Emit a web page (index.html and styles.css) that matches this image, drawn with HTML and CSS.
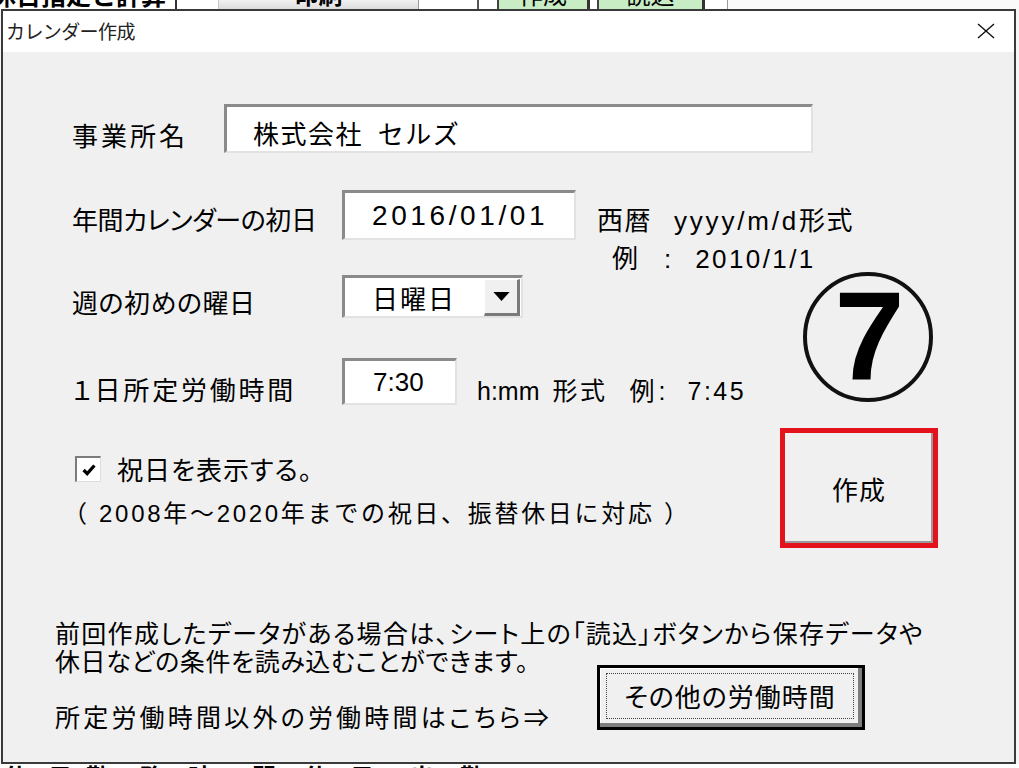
FILE: index.html
```html
<!DOCTYPE html>
<html lang="ja">
<head>
<meta charset="utf-8">
<title>カレンダー作成</title>
<link rel="stylesheet" href="styles.css">
</head>
<body>
<div class="sheet-top">
  <div class="cell cell-title"><span>休日指定と計算</span></div>
  <div class="cell cell-blank1"></div>
  <div class="cell cell-print"><span>印刷</span></div>
  <div class="cell cell-blank2"></div>
  <div class="cell cell-blank3"></div>
  <div class="cell cell-green cell-green1"><span>作成</span></div>
  <div class="cell cell-gap"></div>
  <div class="cell cell-green cell-green2"><span>読込</span></div>
  <div class="cell cell-blank4"></div>
  <div class="cell cell-rest"></div>
</div>

<div class="dialog">
  <div class="titlebar">
    <span class="title">カレンダー作成</span>
    <svg class="close" viewBox="0 0 18 16" aria-label="閉じる">
      <line x1="1" y1="1" x2="17" y2="15" />
      <line x1="17" y1="1" x2="1" y2="15" />
    </svg>
  </div>

  <div class="form">
    <div class="fields">
      <div class="row row-name">
        <div class="label label-name">事業所名</div>
        <div class="box input-name">株式会社&nbsp;&nbsp;セルズ</div>
      </div>

      <div class="row row-date">
        <div class="label label-wide label-date">年間カレンダーの初日</div>
        <div class="box input-date">2016/01/01</div>
        <div class="hint">
          <div class="hint-line"><span class="cjk hint-era">西暦</span><span class="latin hint-fmt">yyyy/m/d</span><span class="cjk hint-era">形式</span></div>
          <div class="hint-line hint-ex"><span class="cjk">例</span><span class="latin hint-colon">:</span><span class="latin hint-num">2010/1/1</span></div>
        </div>
      </div>

      <div class="split">
        <div class="col-left">
          <div class="row row-week">
            <div class="label label-wide label-week">週の初めの曜日</div>
            <div class="box select">
              <span class="select-value">日曜日</span>
              <span class="select-btn">
                <svg class="tri" viewBox="0 0 18 10"><polygon points="0,0 18,0 9,10" /></svg>
              </span>
            </div>
          </div>

          <div class="row row-time">
            <div class="label label-wide label-time">１日所定労働時間</div>
            <div class="box input-time">7:30</div>
            <div class="hint2">
              <span class="latin">h:mm</span><span class="cjk hint2-fmt">形式</span><span class="cjk hint2-ex">例</span><span class="latin">:</span><span class="latin hint2-num">7:45</span>
            </div>
          </div>

          <div class="check-row">
            <span class="checkbox">
              <svg viewBox="0 0 20 20"><polyline points="4,10 8,14 16,5" /></svg>
            </span>
            <span class="check-label">祝日を表示する。</span>
          </div>

          <div class="note">（ 2008年～2020年までの祝日、振替休日に対応 ）</div>
        </div>

        <div class="col-right">
          <div class="create-btn">作成</div>
        </div>
      </div>
    </div>

    <div class="footer">
      <div class="f-line1">前回作成したデータがある場合は、シート上の「読込」ボタンから保存データや</div>
      <div class="f-line2">休日などの条件を読み込むことができます。</div>
      <div class="f-line3">所定労働時間以外の労働時間はこちら⇒</div>
      <div class="other-btn"><span class="focus">その他の労働時間</span></div>
    </div>

    <div class="badge"><span>7</span></div>
  </div>
</div>

<div class="sheet-bottom">
  <span class="frag f1">休</span><span class="frag f2">日</span><span class="frag f3">勤</span><span class="frag f4">務</span><span class="frag f5">時</span><span class="frag f6">間</span><span class="frag f7">休</span><span class="frag f8">日</span><span class="frag f9">出</span><span class="frag f10">勤</span>
</div>
</body>
</html>
```

FILE: styles.css
```css
* {
  box-sizing: border-box;
  margin: 0;
  padding: 0;
}

html,
body {
  width: 1019px;
  height: 768px;
  overflow: hidden;
}

body {
  background: #f6f6f6;
  font-family: "Liberation Sans", "Noto Sans CJK JP", sans-serif;
  color: #000;
}

.cjk {
  font-family: "Noto Sans CJK JP", sans-serif;
}

.latin {
  font-family: "Liberation Sans", "Noto Sans CJK JP", sans-serif;
}

/* ---------- spreadsheet strip behind the dialog ---------- */
.sheet-top {
  height: 9px;
  display: flex;
  overflow: hidden;
  background: #f6f6f6;
}

.cell {
  height: 9px;
  flex: none;
  overflow: hidden;
  display: flex;
  align-items: flex-end;
  justify-content: center;
  font-family: "Noto Sans CJK JP", sans-serif;
  font-weight: 700;
  font-size: 24px;
  line-height: 24px;
}

.cell span {
  margin-bottom: 3px;
  white-space: nowrap;
}

.cell-title {
  width: 177px;
  justify-content: flex-start;
  border-right: 2px solid #333;
  background: #fff;
}

.cell-title span {
  margin-left: -9px;
  font-size: 25px;
}

.cell-blank1 {
  width: 41px;
  background: #fff;
}

.cell-print {
  width: 201px;
  background: linear-gradient(#f2f2f2, #dcdcdc);
  border-right: 1px solid #9a9a9a;
  border-left: 1px solid #c8c8c8;
}

.cell-blank2 {
  width: 60px;
  background: #fff;
  border-right: 2px solid #555;
}

.cell-blank3 {
  width: 18px;
  background: #fff;
}

.cell-green {
  background: #c8ecc4;
  border-left: 2px solid #444;
  border-right: 3px solid #333;
  font-weight: 400;
}

.cell-green1 {
  width: 93px;
}

.cell-gap {
  width: 7px;
  background: #fff;
}

.cell-green2 {
  width: 108px;
}

.cell-blank4 {
  width: 23px;
  background: #fff;
  border-right: 1px solid #9a9a9a;
}

.cell-rest {
  flex: 1;
  background: #fafafa;
}

.sheet-bottom {
  height: 4px;
  overflow: hidden;
  display: flex;
  background: #fff;
  font-family: "Noto Sans CJK JP", sans-serif;
  font-weight: 700;
  font-size: 24px;
  line-height: 24px;
}

.frag {
  flex: none;
}

.f1 { margin-left: 4px; }
.f2 { margin-left: 20px; }
.f3 { margin-left: 14px; }
.f4 { margin-left: 30px; }
.f5 { margin-left: 24px; }
.f6 { margin-left: 40px; }
.f7 { margin-left: 28px; }
.f8 { margin-left: 22px; }
.f9 { margin-left: 36px; }
.f10 { margin-left: 26px; }

/* ---------- dialog ---------- */
.dialog {
  margin-left: 1px;
  width: 1015px;
  height: 755px;
  border: 2px solid #3a3a3a;
  background: #f0f0f0;
  display: flex;
  flex-direction: column;
}

.titlebar {
  flex: none;
  height: 41px;
  background: #fff;
  display: flex;
  align-items: center;
  justify-content: space-between;
  padding: 0 19px 2px 3px;
}

.title {
  font-family: "Noto Sans CJK JP", sans-serif;
  font-size: 19px;
  color: #222;
  letter-spacing: -0.6px;
}

.close {
  width: 18px;
  height: 16px;
  stroke: #111;
  stroke-width: 1.4;
}

.form {
  position: relative;
  flex: 1;
}

.fields {
  padding: 52px 0 0 69px;
}

.row {
  display: flex;
  align-items: flex-start;
}

.label {
  flex: none;
  font-family: "Noto Sans CJK JP", sans-serif;
  font-size: 26px;
  line-height: 30px;
  white-space: nowrap;
  font-feature-settings: "palt";
}

.label-name {
  width: 152px;
  margin-top: 16px;
  letter-spacing: 3px;
}

.label-wide {
  width: 270px;
}

.label-date {
  margin-top: 14px;
  letter-spacing: -0.4px;
}

.label-week {
  margin-top: 12px;
  letter-spacing: 0.5px;
}

.label-time {
  margin-top: 16px;
  letter-spacing: 2.8px;
}

.box {
  flex: none;
  background: #fff;
  border-style: solid;
  border-width: 3px 2px 2px 3px;
  border-color: #8a8a8a #e2e2e2 #e2e2e2 #8a8a8a;
  display: flex;
  align-items: center;
}

.input-name {
  width: 589px;
  height: 49px;
  padding: 6px 0 0 26px;
  font-family: "Noto Sans CJK JP", sans-serif;
  font-size: 26px;
  letter-spacing: 1.5px;
}

.row-date {
  margin-top: 37px;
  height: 50px;
}

.input-date {
  width: 234px;
  height: 50px;
  padding-left: 27px;
  font-size: 28px;
  letter-spacing: 3.6px;
}

.hint {
  margin: 11px 0 0 21px;
  font-size: 26px;
  line-height: 36px;
  white-space: nowrap;
}

.hint-line {
  display: flex;
  align-items: baseline;
}

.hint-era {
  letter-spacing: 1.5px;
}

.hint-fmt {
  margin: 0 0 0 22px;
  letter-spacing: 2.8px;
}

.hint-ex {
  padding-left: 15px;
}

.hint-colon {
  margin: 0 0 0 26px;
}

.hint-num {
  margin-left: 24px;
  letter-spacing: 2.4px;
}

/* ---------- split area ---------- */
.split {
  display: flex;
  margin-top: 35px;
}

.col-left {
  width: 708px;
  flex: none;
}

.col-right {
  flex: none;
}

.select {
  width: 181px;
  height: 43px;
  padding-left: 27px;
  justify-content: space-between;
}

.select-value {
  font-family: "Noto Sans CJK JP", sans-serif;
  font-size: 26px;
  letter-spacing: 2px;
}

.select-btn {
  width: 36px;
  height: 37px;
  margin-right: 1px;
  background: #f0f0f0;
  border-style: solid;
  border-width: 1px 3px 3px 1px;
  border-color: #fff #7a7a7a #7a7a7a #fff;
  display: flex;
  align-items: center;
  justify-content: center;
}

.tri {
  width: 17px;
  height: 9px;
  fill: #000;
}

.row-time {
  margin-top: 40px;
}

.input-time {
  width: 115px;
  height: 47px;
  padding-left: 28px;
  font-size: 26px;
}

.hint2 {
  margin: 16px 0 0 20px;
  font-size: 25px;
  line-height: 30px;
  white-space: nowrap;
  display: flex;
  align-items: baseline;
}

.hint2-fmt {
  margin-left: 13px;
  letter-spacing: 2.5px;
}

.hint2-ex {
  margin-left: 22px;
  margin-right: 4px;
}

.hint2-num {
  margin-left: 22px;
  letter-spacing: 2.5px;
}

.check-row {
  margin-top: 48px;
  display: flex;
  align-items: center;
}

.checkbox {
  flex: none;
  width: 26px;
  height: 26px;
  margin-left: 3px;
  background: #fff;
  border-style: solid;
  border-width: 2px 1px 1px 2px;
  border-color: #7c7c7c #dcdcdc #dcdcdc #7c7c7c;
  display: flex;
  align-items: center;
  justify-content: center;
}

.checkbox svg {
  width: 18px;
  height: 18px;
  fill: none;
  stroke: #000;
  stroke-width: 3.6;
}

.check-label {
  margin-left: 16px;
  font-family: "Noto Sans CJK JP", sans-serif;
  font-size: 26px;
  line-height: 30px;
  letter-spacing: 1px;
  font-feature-settings: "palt";
}

.note {
  margin: 15px 0 0 -9px;
  font-size: 24px;
  line-height: 30px;
  letter-spacing: 2.7px;
  white-space: nowrap;
}

.create-btn {
  margin-top: 153px;
  width: 158px;
  height: 120px;
  border: 5px solid #e3121c;
  background: #f0f0f0;
  box-shadow: inset -2px -2px 0 #9a9a9a;
  display: flex;
  align-items: center;
  justify-content: center;
  font-family: "Noto Sans CJK JP", sans-serif;
  font-size: 26px;
  letter-spacing: 1px;
}

/* ---------- footer ---------- */
.footer {
  display: grid;
  grid-template-columns: 542px 268px;
  margin-top: 70px;
  padding-left: 52px;
  font-family: "Noto Sans CJK JP", sans-serif;
  font-size: 25px;
  line-height: 28px;
  font-feature-settings: "palt";
  white-space: nowrap;
}

.f-line1 {
  grid-column: 1 / 3;
  grid-row: 1;
  letter-spacing: 1.3px;
}

.f-line2 {
  grid-column: 1;
  grid-row: 2;
  letter-spacing: 0.6px;
}

.f-line3 {
  grid-column: 1;
  grid-row: 3;
  align-self: end;
  letter-spacing: 3.2px;
}

.other-btn {
  grid-column: 2;
  grid-row: 2 / 4;
  margin-top: 19px;
  height: 65px;
  border: 3px solid #000;
  background: #f0f0f0;
  box-shadow: inset -4px -4px 0 #7e7e7e, inset 1px 1px 0 #fff;
  padding: 5px 8px 8px 6px;
  display: flex;
}

.focus {
  flex: 1;
  border: 1px dotted #444;
  display: flex;
  align-items: center;
  justify-content: center;
  font-size: 26px;
  letter-spacing: 1px;
}

/* ---------- annotation badge ⑦ ---------- */
.badge {
  position: absolute;
  left: 800px;
  top: 220px;
  width: 130px;
  height: 130px;
  border: 4px solid #111;
  border-radius: 50%;
  display: flex;
  align-items: center;
  justify-content: center;
  font-family: "Liberation Sans", sans-serif;
  font-weight: 700;
  font-size: 126px;
  line-height: 1;
}

.badge span {
  margin-left: 3px;
}
```
